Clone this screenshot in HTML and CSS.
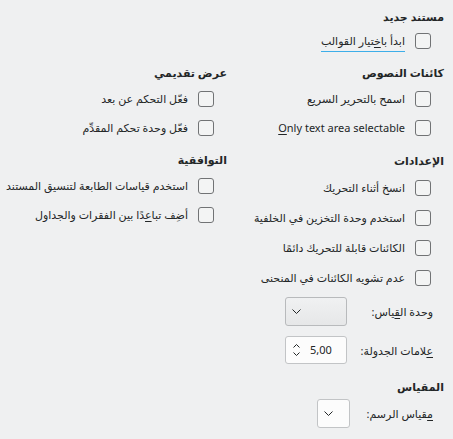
FILE: index.html
```html
<!DOCTYPE html>
<html lang="ar" dir="rtl">
<head>
<meta charset="utf-8">
<link rel="stylesheet" href="styles.css">
</head>
<body>
<div class="page">
  <section class="group g-new">
    <h2 class="heading">مستند جديد</h2>
    <label class="row"><span class="box"></span><span class="text focus">ابدأ با<span class="mn">خ</span>تيار القوالب</span></label>
  </section>

  <section class="group g-text">
    <h2 class="heading">كائنات النصوص</h2>
    <label class="row"><span class="box"></span><span class="text">اسمح بالتحرير السريع</span></label>
    <label class="row"><span class="box"></span><span class="text ltr"><span class="mn">O</span>nly text area selectable</span></label>
  </section>

  <section class="group g-show">
    <h2 class="heading">عرض تقديمي</h2>
    <label class="row"><span class="box"></span><span class="text">فعّل التحكم عن بعد</span></label>
    <label class="row"><span class="box"></span><span class="text">فعّل وحدة تحكم المقدِّم</span></label>
  </section>

  <section class="group g-settings">
    <h2 class="heading">الإعدادات</h2>
    <label class="row"><span class="box"></span><span class="text">انسخ أثناء التحريك</span></label>
    <label class="row"><span class="box"></span><span class="text">استخدم وحدة التخزين في الخلفية</span></label>
    <label class="row"><span class="box"></span><span class="text">الكائنات قابلة للتحريك دائمًا</span></label>
    <label class="row"><span class="box"></span><span class="text">عدم تشويه الكائنات في المنحنى</span></label>

    <div class="form form-units">
      <span class="flabel">وحدة ال<span class="mn">ق</span>ياس:</span>
      <span class="combo"><svg class="chev" width="9" height="5" viewBox="0 0 9 5"><polyline points="0.5,0.5 4.5,4.5 8.5,0.5" fill="none" stroke="#232627" stroke-width="1"/></svg></span>
      <span class="flabel"><span class="mn">ع</span>لامات الجدولة:</span>
      <span class="spin">
        <svg class="spinarrows" width="7" height="14" viewBox="0 0 7 14"><polyline points="0.5,4.5 3.5,1.5 6.5,4.5" fill="none" stroke="#232627" stroke-width="1"/><polyline points="0.5,9.5 3.5,12.5 6.5,9.5" fill="none" stroke="#232627" stroke-width="1"/></svg>
        <span class="num">5,00</span>
      </span>
    </div>

    <h2 class="heading h-scale">المقياس</h2>
    <div class="form form-scale">
      <span class="flabel"><span class="mn">م</span>قياس الرسم:</span>
      <span class="combo combo-small"><svg class="chev" width="9" height="5" viewBox="0 0 9 5"><polyline points="0.5,0.5 4.5,4.5 8.5,0.5" fill="none" stroke="#232627" stroke-width="1"/></svg></span>
    </div>
  </section>

  <section class="group g-compat">
    <h2 class="heading">التوافقية</h2>
    <label class="row"><span class="box"></span><span class="text">استخدم قياسات الطابعة لتنسيق المستند</span></label>
    <label class="row"><span class="box"></span><span class="text">أضِف تبا<span class="mn">ع</span>دًا بين الفقرات والجداول</span></label>
  </section>
</div>
</body>
</html>
```

FILE: styles.css
```css
html, body {
  margin: 0;
  padding: 0;
  background: #eff0f1;
}

body {
  font-family: "Noto Sans", "DejaVu Sans", sans-serif;
  font-size: 11px;
  color: #232627;
  width: 453px;
  height: 439px;
  overflow: hidden;
}

.page {
  display: grid;
  grid-template-columns: 207px 1fr;
  grid-template-rows: auto auto auto;
  column-gap: 10px;
  row-gap: 11px;
  padding: 8px 9px 0 0;
  align-items: start;
}

.g-new { grid-column: 1; grid-row: 1; }
.g-text { grid-column: 1; grid-row: 2; }
.g-show { grid-column: 2; grid-row: 2; }
.g-settings { grid-column: 1; grid-row: 3; }
.g-compat { grid-column: 2; grid-row: 3; }

.group {
  display: flex;
  flex-direction: column;
  gap: 5px;
}

.g-new { gap: 3px; }
.g-settings { gap: 6px; margin-top: 1px; }

.heading {
  margin: 0;
  font-size: 11px;
  font-weight: bold;
  height: 18px;
  line-height: 18px;
  white-space: nowrap;
}

.row {
  display: flex;
  align-items: center;
  gap: 10px;
  height: 24px;
  padding-right: 13px;
  white-space: nowrap;
}

.box {
  flex: none;
  width: 16px;
  height: 16px;
  box-sizing: border-box;
  border: 1px solid #717375;
  border-radius: 3px;
  background: #f3f4f4;
}

.text {
  line-height: 16px;
}

.ltr {
  direction: ltr;
  unicode-bidi: isolate;
}

.focus {
  padding-bottom: 2px;
  border-bottom: 1px solid #3daee9;
  margin-top: 3px;
}

.mn {
  text-decoration: underline;
  text-underline-offset: 2px;
}

.form {
  display: grid;
  align-items: center;
  padding-right: 11px;
  white-space: nowrap;
}

.form-units {
  grid-template-columns: 86px 62px;
  row-gap: 10px;
  margin-top: 1px;
}

.form-scale {
  grid-template-columns: 83px 33px;
  margin-top: -3px;
}

.h-scale {
  margin-top: 8px;
}

.flabel {
  text-align: right;
}

.combo, .spin {
  box-sizing: border-box;
  height: 29px;
  border-radius: 3px;
  display: flex;
  align-items: center;
}

.combo {
  width: 62px;
  border: 1px solid #b8babc;
  background: linear-gradient(#f0f1f2, #e6e7e8);
  justify-content: flex-end;
  padding-left: 6px;
}

.combo-small {
  width: 33px;
  height: 29px;
  background: #fcfcfc;
  border-color: #c2c4c6;
  padding-left: 6px;
}

.spin {
  width: 62px;
  height: 28px;
  border: 1px solid #c2c4c6;
  background: #fcfcfc;
  direction: ltr;
  justify-content: flex-start;
  padding-left: 7px;
  gap: 10px;
}

.chev, .spinarrows {
  display: block;
}

.num {
  line-height: 16px;
}
```
